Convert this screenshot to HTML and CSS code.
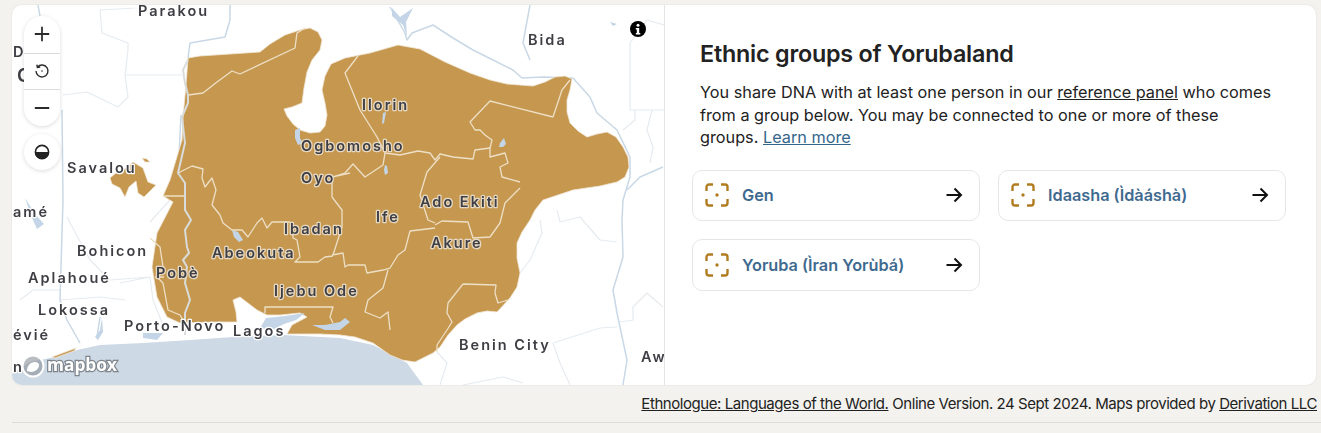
FILE: index.html
```html
<!DOCTYPE html>
<html lang="en">
<head>
<meta charset="utf-8">
<title>Ethnic groups of Yorubaland</title>
<link rel="stylesheet" href="styles.css">
</head>
<body>
<main class="page">
  <section class="card">
    <div class="map">
      <svg class="map-art" viewBox="12 5 652 380" aria-label="Map of Yorubaland">
        <g class="borders">
          <path d="M100 10L102 33L128 43L128 50L125 75L128 97L118 107L87 92L63 95M125 75L182 75M100 10L135 8"/>
          <path d="M67 217L90 260L110 280L150 277L153 300L165 330M150 222L170 200M20 300L33 290L60 290M60 300L100 297L125 300M150 277L120 283"/>
          <path d="M540 220L542 233L530 260L520 273M557 210L560 222L580 217L600 240L617 242M553 343L600 328L617 327M553 343L560 363L570 385M663 307L647 293L633 307L633 320L620 322M440 385L447 363L437 352M523 383L503 377L463 385"/>
          <path d="M630 43L630 110L664 110M630 43L647 20L664 25M635 110L635 120L623 130M652 110L647 130L653 147L650 163"/>
        </g>
        <g class="rivers">
          <path d="M390 7L405 33L407 40L412 33L433 25L453 38L473 50L493 60L513 70L522 78L543 77L573 78L590 97L597 113L617 130L630 157L630 177L623 200L622 220L623 257L613 290L617 313L627 360L623 385"/>
          <path d="M663 167L640 177L627 190M530 5L523 43L530 60"/>
          <path d="M38 5L40 16M230 5L230 20L225 37L190 43L188 58M62 110L63 200L60 300L67 320L80 343M181 115L178 175M100 317L97 337"/>
        </g>
        <g class="lakes">
          <path d="M392 8L400 17L413 8L406 22L407 36L403 25L392 16Z"/>
          <path d="M25 198L35 214L44 224L37 229L32 218Z"/>
          <path d="M143 333L163 333L157 340L143 338Z"/>
          <path d="M102 318L100 330L95 337L98 340L103 332Z"/>
          <path d="M610 22L617 24L613 26Z"/>
        </g>
        <path class="sea" d="M12 385L12 374L30 362L50 358L77 350L100 345L143 343L190 340L233 337L283 335L340 338L373 345L407 363L423 385Z"/>
        <path class="gold" d="M188 58L200 56L230 54L260 52L270 44L285 35L300 30L310 28L318 32L322 40L320 50L312 60L307 72L304 88L302 103L292 107L284 109L287 116L293 124L300 130L310 133L320 132L325 126L327 115L325 103L322 90L325 76L331 64L345 58L370 53L398 45L420 49L445 62L470 73L490 80L507 84L533 86L545 82L555 77L565 76L572 79L570 90L567 100L567 112L570 123L578 131L587 137L597 134L607 132L616 137L623 147L628 157L629 167L625 177L617 182L600 186L573 190L555 196L543 200L535 210L530 220L522 232L517 243L517 258L520 273L517 287L510 298L497 312L487 311L477 313L465 319L457 325L448 335L440 347L433 353L415 362L402 360L390 355L373 343L355 337L340 335L320 334L287 334L292 325L307 317L300 313L280 315L267 315L257 310L240 297L233 300L236 312L237 322L217 322L180 323L167 317L157 297L152 267L157 233L173 202L163 196L170 180L176 160L182 140L183 117L186 85Z"/>
        <path class="gold" d="M110 178L117 172L126 168L133 162L143 168L148 182L156 185L144 197L138 193L136 181L129 187L125 197L120 188L112 184ZM142 158L147 159L150 162L145 162Z"/>
        <path class="gold" d="M52 357L76 348L74 351L55 358Z"/>
        <g class="lakes">
          <path d="M260 328L266 318L285 316L305 313L296 320L284 324L272 330Z"/>
          <path d="M312 325L325 325L340 322L345 318L350 322L340 330L325 330Z"/>
          <path d="M295 130L300 128L300 138L303 143L298 145L295 138Z"/>
          <path d="M500 143L504 138L506 144L503 147L499 147Z"/>
          <path d="M383 113L386 112L384 123L382 124ZM385 165L387 166L388 173L385 175L384 170Z"/>
          <path d="M232 230L238 232L243 240L239 242L234 237Z"/>
        </g>
        <g class="lines">
          <path d="M188 95L203 93L217 82L232 71L240 74L295 48L297 33L305 28"/>
          <path d="M358 56L345 73L360 110L377 137L385 153L400 155L418 151L430 153L435 160L440 154L453 157L473 159L475 150L490 148L490 157L505 153L508 163L500 167L502 177L520 182"/>
          <path d="M553 117L562 90L570 80M553 117L490 101L470 122L475 130L480 130L485 135L492 140L490 148"/>
          <path d="M440 157L427 172L420 195L428 220L435 223M435 225L442 221L468 222L473 238L490 237L500 223L505 203L520 188"/>
          <path d="M435 228L410 231L405 250L398 255L390 268L383 270L367 273L365 265L348 265L345 267L343 253L332 255M388 270L383 288L368 300L365 312L380 318L388 312L390 330"/>
          <path d="M385 153L383 165L365 177L353 164L345 173L332 177L332 197L342 210L342 227L333 255M332 177L350 173"/>
          <path d="M178 173L192 166L203 169L202 178L205 187L212 178L216 190L212 205L220 215L223 223L232 230L242 230L248 237L257 223L262 218L267 228L272 222L290 222M293 233L293 238L297 240L300 257L295 262L318 262L325 257L333 256"/>
          <path d="M150 238L160 247L163 267L157 277L163 283L168 310L180 315L183 320M163 196L185 196M155 277L164 277"/>
          <path d="M265 313L265 307L333 307L330 317L333 323"/>
          <path d="M463 284L496 285L495 293L498 303L508 300M463 284L448 303L447 313L452 322L447 330L437 345L437 352"/>
        </g>
        <path class="frontier" d="M188 60L183 70L185 83L188 95L188 103L182 117L185 143L178 173L185 183L185 210L191 220L185 230L187 247L189 253L183 260L187 267L185 283L190 300L185 313L185 335"/>
        <g class="labels">
          <text class="place" x="138" y="16">Parakou</text>
          <text class="place" x="528" y="45">Bida</text>
          <text class="place" x="13" y="57">Deo</text>
          <text class="place big" x="17" y="82">O</text>
          <text class="place" x="67" y="173">Savalou</text>
          <text class="place" x="13" y="217">amé</text>
          <text class="place" x="77" y="256">Bohicon</text>
          <text class="place" x="28" y="283">Aplahoué</text>
          <text class="place" x="38" y="315">Lokossa</text>
          <text class="place" x="13" y="340">évié</text>
          <text class="place" x="124" y="331">Porto-Novo</text>
          <text class="place" x="233" y="336">Lagos</text>
          <text class="place" x="459" y="350">Benin City</text>
          <text class="place" x="641" y="362">Aw</text>
          <text class="place" x="13" y="372">n</text>
          <text class="region" x="362" y="110">Ilorin</text>
          <text class="region" x="301" y="151">Ogbomosho</text>
          <text class="region" x="301" y="183">Oyo</text>
          <text class="region" x="420" y="207">Ado Ekiti</text>
          <text class="region" x="376" y="222">Ife</text>
          <text class="region" x="284" y="234">Ibadan</text>
          <text class="region" x="431" y="248">Akure</text>
          <text class="region" x="212" y="258">Abeokuta</text>
          <text class="region" x="156" y="278">Pobè</text>
          <text class="region" x="274" y="296">Ijebu Ode</text>
        </g>
        <g class="mapbox-logo">
          <circle cx="33" cy="366" r="10.500"/>
          <path class="mapbox-mark" d="M27 371c0-5 3-9 8-9 2 0 4 1 4 3 0 4-4 7-8 7z"/>
          <text class="mapbox-word" x="47" y="371">mapbox</text>
        </g>
      </svg>
      <div class="zoom-stack">
        <button class="ctl" aria-label="Zoom in"><svg class="ctl-icon" viewBox="0 0 20 20"><path d="M1 10h18M10 1v18"/></svg></button>
        <button class="ctl" aria-label="Reset"><svg class="ctl-icon thin" viewBox="0 0 20 20"><path d="M4.200 5.200a7.500 7.500 0 1 1-1.700 4.800M3.600 2l.6 3.600 3.600-.4"/><circle cx="10" cy="10" r="1"/></svg></button>
        <button class="ctl" aria-label="Zoom out"><svg class="ctl-icon" viewBox="0 0 20 20"><path d="M1 10h18"/></svg></button>
      </div>
      <button class="contrast" aria-label="Contrast"><svg class="contrast-icon" viewBox="0 0 16 16"><circle class="ring" cx="8" cy="8" r="6.600"/><path class="half" d="M1 8a7 7 0 0 0 14 0z"/></svg></button>
      <svg class="info" viewBox="0 0 16 16" aria-label="Information"><circle cx="8" cy="8" r="8"/><circle class="info-mark" cx="8" cy="4.200" r="1.500"/><path class="info-mark" d="M5.800 7h3.400v5h1.100v1.500H5.800V12h1V8.500h-1z"/></svg>
    </div>
    <div class="panel">
      <h2 class="title">Ethnic groups of Yorubaland</h2>
      <p class="intro">You share DNA with at least one person in our <a class="plain-link" href="#">reference panel</a> who comes from a group below. You may be connected to one or more of these groups. <a class="learn" href="#">Learn more</a></p>
      <div class="groups">
        <a class="group" href="#">
          <svg class="focus" viewBox="0 0 24 24"><path d="M1.500 8V4a2.500 2.500 0 0 1 2.500-2.500h4M16 1.500h4A2.500 2.500 0 0 1 22.500 4v4M22.500 16v4a2.500 2.500 0 0 1-2.500 2.500h-4M8 22.500H4A2.500 2.500 0 0 1 1.500 20v-4"/><circle cx="12" cy="12" r="1.700"/></svg>
          <span class="group-name">Gen</span>
          <svg class="arrow" viewBox="0 0 18 18"><path d="M1.500 9h14.500M9.500 2.500 16 9l-6.500 6.500"/></svg>
        </a>
        <a class="group" href="#">
          <svg class="focus" viewBox="0 0 24 24"><path d="M1.500 8V4a2.500 2.500 0 0 1 2.500-2.500h4M16 1.500h4A2.500 2.500 0 0 1 22.500 4v4M22.500 16v4a2.500 2.500 0 0 1-2.500 2.500h-4M8 22.500H4A2.500 2.500 0 0 1 1.500 20v-4"/><circle cx="12" cy="12" r="1.700"/></svg>
          <span class="group-name">Idaasha (Ìdàáshà)</span>
          <svg class="arrow" viewBox="0 0 18 18"><path d="M1.500 9h14.500M9.500 2.500 16 9l-6.500 6.500"/></svg>
        </a>
        <a class="group" href="#">
          <svg class="focus" viewBox="0 0 24 24"><path d="M1.500 8V4a2.500 2.500 0 0 1 2.500-2.500h4M16 1.500h4A2.500 2.500 0 0 1 22.500 4v4M22.500 16v4a2.500 2.500 0 0 1-2.500 2.500h-4M8 22.500H4A2.500 2.500 0 0 1 1.500 20v-4"/><circle cx="12" cy="12" r="1.700"/></svg>
          <span class="group-name">Yoruba (Ìran Yorùbá)</span>
          <svg class="arrow" viewBox="0 0 18 18"><path d="M1.500 9h14.500M9.500 2.500 16 9l-6.500 6.500"/></svg>
        </a>
      </div>
    </div>
  </section>
  <p class="credit"><a class="credit-link" href="#">Ethnologue: Languages of the World.</a> Online Version. 24 Sept 2024. Maps provided by <a class="credit-link" href="#">Derivation LLC</a></p>
  <hr class="rule">
</main>
</body>
</html>
```
FILE: styles.css
```css
* { box-sizing: border-box; }
html, body { margin: 0; height: 100%; }
body {
  background: #f4f2ee;
  font-family: Inter, "Liberation Sans", sans-serif;
  color: #1e1e1e;
  overflow: hidden;
}
.page { padding: 5px 0 0 12px; }
.card {
  display: flex;
  width: 1304px;
  height: 380px;
  background: #fff;
  border-radius: 10px;
  box-shadow: 0 0 0 1px #ecebe7;
  overflow: hidden;
}
.map {
  position: relative;
  flex: 0 0 653px;
  height: 100%;
  border-right: 1px solid #e2e4e8;
  overflow: hidden;
}
.map-art { display: block; width: 652px; height: 380px; filter: blur(.35px); }
.borders path { fill: none; stroke: #e6ebf0; stroke-width: 1.200; stroke-linejoin: round; }
.rivers path { fill: none; stroke: #c9d8e6; stroke-width: 1.500; stroke-linejoin: round; }
.lakes path { fill: #c3d5e7; stroke: none; }
.gold { fill: #c6984f; stroke: #f0e6d6; stroke-width: .8; stroke-linejoin: round; }
.sea { fill: #cdd9e5; }
.lines path { fill: none; stroke: #eddfc6; stroke-width: 1.300; stroke-linejoin: round; }
.frontier { fill: none; stroke: #d9dcdb; stroke-width: 2; stroke-linejoin: round; }
.labels text {
  font-family: Inter, "Liberation Sans", sans-serif;
  font-size: 14.500px;
  font-weight: 600;
  letter-spacing: 2px;
  fill: #3e3e44;
  paint-order: stroke;
  stroke-linejoin: round;
}
.place { stroke: #fff; stroke-width: 2.500px; }
.region { stroke: #e6d9c4; stroke-width: 2.500px; }
.labels .big { font-size: 19px; }
.mapbox-logo circle { fill: #8a8f96; stroke: #fff; stroke-width: 2; fill-opacity: .6; }
.mapbox-mark { fill: #fff; }
.mapbox-word {
  font-family: "Open Sans", "Liberation Sans", sans-serif;
  font-size: 17.300px;
  font-weight: 700;
  fill: #fff;
  stroke: #7f858c;
  stroke-width: 2.500px;
  paint-order: stroke;
}
.zoom-stack {
  position: absolute;
  left: 12px;
  top: 11px;
  width: 36px;
  display: flex;
  flex-direction: column;
  background: #fff;
  border-radius: 18px;
  box-shadow: 0 1px 4px rgba(0, 0, 0, .14);
}
.ctl {
  width: 36px;
  height: 36.670px;
  padding: 0 0 1px;
  border: 0;
  background: none;
  display: flex;
  align-items: center;
  justify-content: center;
}
.ctl + .ctl { border-top: 1px solid #dcdcdc; }
.ctl-icon { width: 16px; height: 16px; fill: none; stroke: #2b2b2b; stroke-width: 2.200; }
.ctl-icon.thin { stroke-width: 1.700; }
.ctl-icon circle { fill: #2b2b2b; stroke: none; }
.contrast {
  position: absolute;
  left: 12px;
  top: 129px;
  width: 36px;
  height: 36px;
  padding: 0;
  border: 0;
  border-radius: 50%;
  background: #fff;
  box-shadow: 0 1px 4px rgba(0, 0, 0, .14);
  display: flex;
  align-items: center;
  justify-content: center;
}
.contrast-icon { width: 16px; height: 16px; }
.ring { fill: none; stroke: #222; stroke-width: 1.600; }
.half { fill: #222; }
.info { position: absolute; left: 618px; top: 16px; width: 16px; height: 16px; }
.info-mark { fill: #fff; }
.panel { flex: 1; padding: 35px 30px 0 27px; }
.title {
  margin: 0 0 13px 8px;
  font-size: 23.300px;
  line-height: 28px;
  font-weight: 600;
  letter-spacing: -.2px;
  color: #222;
}
.intro {
  margin: 0 0 21px 8px;
  max-width: 578px;
  font-size: 16.250px;
  line-height: 22.500px;
  color: #222;
}
.plain-link { color: inherit; text-decoration: underline; }
.learn { color: #34668c; text-decoration: underline; }
.groups {
  display: grid;
  grid-template-columns: 288px 288px;
  column-gap: 18px;
  row-gap: 18px;
}
.group {
  display: flex;
  align-items: center;
  height: 51.500px;
  padding: 0 16px 0 12px;
  border: 1px solid #e6e6e6;
  border-radius: 10px;
  background: #fff;
  text-decoration: none;
}
.focus { flex: none; width: 24px; height: 24px; fill: none; stroke: #b17c20; stroke-width: 2.400; }
.focus circle { fill: #b17c20; stroke: none; }
.group-name {
  flex: 1;
  margin-left: 13px;
  font-size: 16.250px;
  font-weight: 600;
  color: #3f6a8f;
}
.arrow { flex: none; width: 18px; height: 18px; fill: none; stroke: #111; stroke-width: 2; }
.credit {
  margin: 10px 0 0;
  width: 1305px;
  text-align: right;
  font-size: 15px;
  line-height: 18px;
  letter-spacing: -.44px;
  color: #222;
  white-space: nowrap;
}
.credit-link { color: inherit; text-decoration: underline; }
.rule { margin: 9px 0 0; border: 0; border-top: 1px solid #dedcd8; }
```
